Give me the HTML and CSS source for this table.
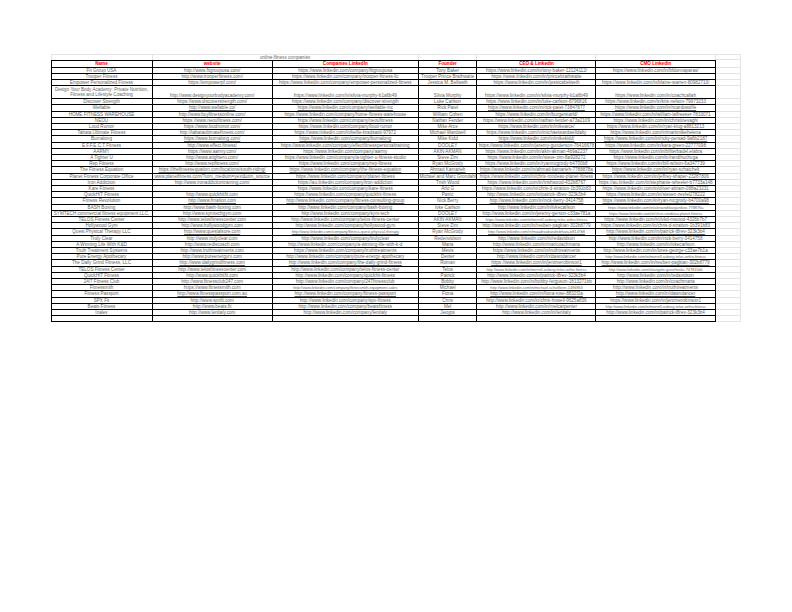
FILE: index.html
```html
<!DOCTYPE html>
<html>
<head>
<meta charset="utf-8">
<link rel="stylesheet" href="styles.css">
</head>
<body>
<div class="page">
<div class="sheet">
  <div class="title-row">
    <div></div>
    <div class="span2">online fitness companies</div>
    <div></div><div></div><div></div><div class="ext"></div>
  </div>
  <div class="grid">
    <div class="h">Name</div><div class="h">website</div><div class="h">Companies LinkedIn</div><div class="h">Founder</div><div class="h">CEO &amp; Linkedin</div><div class="h">CMO Linkedin</div><div></div>

    <div>Fit Group USA</div><div><a>http://www.fitgroupusa.com/</a></div><div><a>https://www.linkedin.com/company/fitgroupusa</a></div><div>Tony Baker</div><div><a>https://www.linkedin.com/in/tony-baker-12124112/</a></div><div><a>https://www.linkedin.com/in/bfdonnaparas/</a></div><div></div>
    <div>Trooper Fitness</div><div><a>http://www.trooperfitness.com/</a></div><div><a>https://www.linkedin.com/company/trooper-fitness-llc</a></div><div>Trooper Prince Brathwaite</div><div><a>https://www.linkedin.com/in/princebrathwaite</a></div><div></div><div></div>
    <div>Empower Personalized Fitness</div><div><a>https://empowerpf.com/</a></div><div><a>https://www.linkedin.com/company/empower-personalized-fitness</a></div><div>Jessica M. Bellweih</div><div><a>https://www.linkedin.com/in/jessicabelweih</a></div><div><a>https://www.linkedin.com/in/blaine-warren-80982710/</a></div><div></div>
    <div class="tall">Design Your Body Academy: Private Nutrition, Fitness and Lifestyle Coaching</div><div><a>http://www.designyourbodyacademy.com/</a></div><div><a>https://www.linkedin.com/in/silvia-murphy-b1a6b49</a></div><div>Silvia Murphy</div><div><a>https://www.linkedin.com/in/silvia-murphy-b1a6b49</a></div><div><a>https://www.linkedin.com/in/coachcallah</a></div><div></div>
    <div>Discover Strength</div><div><a>https://www.discoverstrength.com/</a></div><div><a>https://www.linkedin.com/company/discover-strength</a></div><div>Luke Carlson</div><div><a>https://www.linkedin.com/in/luke-carlson-8796816</a></div><div><a>https://www.linkedin.com/in/kris-nelson-79973233</a></div><div></div>
    <div>Wellable</div><div><a>http://www.wellable.co/</a></div><div><a>https://www.linkedin.com/company/wellable-inc</a></div><div>Rick Patel</div><div><a>https://www.linkedin.com/in/rick-patel-73847877</a></div><div><a>https://www.linkedin.com/in/ricardowolfe</a></div><div></div>
    <div>HOME FITNESS WAREHOUSE</div><div><a>http://www.buyfitnessonline.com/</a></div><div><a>https://www.linkedin.com/company/home-fitness-warehouse</a></div><div>William Cohen</div><div><a>https://www.linkedin.com/in/burgerstarld/</a></div><div><a>https://www.linkedin.com/in/william-lalfreeser-7833071</a></div><div></div>
    <div>NEOU</div><div><a>https://www.neoufitness.com/</a></div><div><a>https://www.linkedin.com/company/neoufitness</a></div><div>Nathan Fender</div><div><a>https://www.linkedin.com/in/nathan-fender-a73a2109</a></div><div><a>https://www.linkedin.com/in/christinevaghi</a></div><div></div>
    <div>Loud Rumor</div><div><a>https://www.loudrumor.com/</a></div><div><a>https://www.linkedin.com/company/loud-rumor</a></div><div>Mike Arce</div><div><a>https://www.linkedin.com/in/mikearce/</a></div><div><a>https://www.linkedin.com/in/ryan-klug-a8813213</a></div><div></div>
    <div>Tabata Ultimate Fitness</div><div><a>http://tabataultimatefitness.com/</a></div><div><a>https://www.linkedin.com/in/kellie-bradsaidi-97972</a></div><div>Michael Wardwell</div><div><a>https://www.linkedin.com/in/michaelwardwelldalty</a></div><div><a>https://www.linkedin.com/in/markmikehelena</a></div><div></div>
    <div>Burnalong</div><div><a>https://www.burnalong.com/</a></div><div><a>https://www.linkedin.com/company/burnalong</a></div><div>Mike Kidd</div><div><a>https://www.linkedin.com/in/mikekidd/</a></div><div><a>https://www.linkedin.com/in/ricky-persad-9a6b2187</a></div><div></div>
    <div>E.F.F.E.C.T Fitness</div><div><a>http://www.effect.fitness/</a></div><div><a>https://www.linkedin.com/company/effectfitnesspersonaltraining</a></div><div>DOOLEY</div><div><a>https://www.linkedin.com/in/jeremy-gunderson-76416678</a></div><div><a>https://www.linkedin.com/in/kara-green-22777098</a></div><div></div>
    <div>AARMY</div><div><a>https://www.aarmy.com/</a></div><div><a>https://www.linkedin.com/company/aarmy</a></div><div><a>AKIN AKMAN</a></div><div><a>https://www.linkedin.com/in/akin-akman-4b9a2237</a></div><div><a>https://www.linkedin.com/in/bfilterbadel.elabra</a></div><div></div>
    <div>A Tighter U</div><div><a>http://www.atighteru.com/</a></div><div><a>https://www.linkedin.com/company/a-tighter-u-fitness-studio</a></div><div>Steve Zim</div><div><a>https://www.linkedin.com/in/steve-zim-8a928272</a></div><div><a>https://www.linkedin.com/in/randihuchuga</a></div><div></div>
    <div>Rep Fitness</div><div><a>http://www.repfitness.com/</a></div><div><a>https://www.linkedin.com/company/rep-fitness</a></div><div>Ryan McGrody</div><div><a>https://www.linkedin.com/in/ryanmcgrody-b4700b8</a></div><div><a>https://www.linkedin.com/in/bill-wilson-6a347739</a></div><div></div>
    <div>The Fitness Equation</div><div><a>https://thefitnessequation.com/locations/south-riding/</a></div><div><a>https://www.linkedin.com/company/the-fitness-equation</a></div><div><a>Ahmad Kamarieh</a></div><div><a>https://www.linkedin.com/in/ahmad-kamarieh-7788878a</a></div><div><a>https://www.linkedin.com/in/ryan-schaichelt</a></div><div></div>
    <div>Planet Fitness Corporate Office</div><div><a>www.planetfitness.com/?utm_medium=yext&amp;utm_source</a></div><div><a>https://www.linkedin.com/company/planet-fitness</a></div><div>Michael and Marc Grondahl</div><div><a>https://www.linkedin.com/in/chris-rondeau-planet-fitness</a></div><div><a>https://www.linkedin.com/in/jeffrey-shaper-23287806</a></div><div></div>
    <div>Iron Addiction</div><div><a>http://www.ironaddictiontraining.com/</a></div><div><a>https://au.linkedin.com/company/iron-addiction</a></div><div>Trish Wood</div><div><a>https://www.linkedin.com/in/trishwood-432b8767</a></div><div><a>https://au.linkedin.com/in/stephanie-wheeler-b7733a148</a></div><div></div>
    <div>Kare Fitness</div><div></div><div><a>https://www.linkedin.com/company/kare-fitness</a></div><div>Arlo G</div><div><a>https://www.linkedin.com/in/chris-d-stratton-1b391b83</a></div><div><a>https://www.linkedin.com/in/oliver-abram-088a23231</a></div><div></div>
    <div>QuickHIT Fitness</div><div><a>http://www.quickhitfit.com</a></div><div><a>https://www.linkedin.com/company/quickhit-fitness</a></div><div>Patric</div><div><a>http://www.linkedin.com/in/patrick-t8rev-323k3b4</a></div><div><a>https://www.linkedin.com/in/steven-zevfel278222</a></div><div></div>
    <div>Fitness Revolution</div><div><a>http://www.frnation.com</a></div><div><a>http://www.linkedin.com/company/fitness-consulting-group</a></div><div>Nick Berry</div><div><a>http://www.linkedin.com/in/nick-berry-3414758</a></div><div><a>https://www.linkedin.com/in/ryan-mcgrody-b4700a98</a></div><div></div>
    <div>BASH Boxing</div><div><a>http://www.bash-boxing.com</a></div><div><a>http://www.linkedin.com/company/bash-boxing</a></div><div>Ivke Carlson</div><div><a>http://www.linkedin.com/in/ivkecarlson</a></div><div class="sm"><a>https://www.linkedin.com/in/alexandrkarganikov-778876a</a></div><div></div>
    <div>SYMTECH commercial fitness equipment LLC.</div><div><a>http://www.symtechgym.com</a></div><div><a>http://www.linkedin.com/company/sym-tech</a></div><div>DOOLEY</div><div><a>http://www.linkedin.com/in/jeremy-gerson-c33ae781a</a></div><div class="sm"><a>https://www.linkedin.com/in/chris-rondeau-planet-fitness</a></div><div></div>
    <div>TELOS Fitness Center</div><div><a>http://www.telosfitnesscenter.com</a></div><div><a>http://www.linkedin.com/company/telos-fitness-center</a></div><div><a>AKIN AKMAN</a></div><div class="sm"><a>https://www.linkedin.com/in/merrell-asberg-telos-ortho-fitness</a></div><div><a>https://www.linkedin.com/in/ivkd-mwood-4326b7b7</a></div><div></div>
    <div>Hollywood Gym</div><div><a>http://www.hollywoodgym.com</a></div><div><a>http://www.linkedin.com/company/hollywood-gym</a></div><div>Steve Zim</div><div><a>http://www.linkedin.com/in/reuben-pagkian-302b8779</a></div><div><a>https://www.linkedin.com/in/chris-d-stratton-1b391b83</a></div><div></div>
    <div>Quest Physical Therapy LLC</div><div><a>http://www.questalsure.com</a></div><div class="sm"><a>http://www.linkedin.com/company/fitness-quest-physical-therapy</a></div><div>Ryan McGrody</div><div class="sm"><a>http://www.linkedin.com/in/maadraabarabubhata-b8147b8</a></div><div><a>http://www.linkedin.com/in/patrick-t8rev-323k3b4</a></div><div></div>
    <div>Truly Clear</div><div><a>http://www.trulyclear.com</a></div><div><a>http://www.linkedin.com/company/trulyclear</a></div><div>Redenvidson</div><div><a>http://www.linkedin.com/in/redavidson</a></div><div><a>http://www.linkedin.com/in/nick-berry-3414758</a></div><div></div>
    <div>A Winning Life With K&amp;D</div><div><a>http://www.rediscoach.com</a></div><div><a>http://www.linkedin.com/company/a-winning-life-with-k-d</a></div><div>Maria</div><div><a>http://www.linkedin.com/in/maricoachmaria</a></div><div><a>http://www.linkedin.com/in/ivkecarlson</a></div><div></div>
    <div>Truth Treatment Systems</div><div><a>http://www.truthtreatments.com</a></div><div><a>https://www.linkedin.com/company/truthtreatments</a></div><div>Mevis</div><div><a>https://www.linkedin.com/in/truthtreatments</a></div><div><a>http://www.linkedin.com/in/lores-george-c33ae7b1a</a></div><div></div>
    <div>Pure Energy Apothecary</div><div><a>http://www.pureenergyrx.com</a></div><div><a>http://www.linkedin.com/company/pure-energy-apothecary</a></div><div>Dexter</div><div><a>http://www.linkedin.com/in/dawndancer</a></div><div class="sm"><a>http://www.linkedin.com/in/merrell-asberg-telos-ortho-fitness</a></div><div></div>
    <div>The Daily Grind Fitness, LLC</div><div><a>http://www.dailygrindfitness.com</a></div><div><a>http://www.linkedin.com/company/the-daily-grind-fitness</a></div><div>Roman</div><div><a>https://www.linkedin.com/in/jeromerobinson1</a></div><div><a>http://www.linkedin.com/in/reuben-pagkian-302b8779</a></div><div></div>
    <div>TELOS Fitness Center</div><div><a>http://www.telosfitnesscenter.com</a></div><div><a>http://www.linkedin.com/company/telos-fitness-center</a></div><div>Telos</div><div class="sm"><a>http://www.linkedin.com/in/merrell-asberg-telos-ortho-fitness</a></div><div class="sm"><a>http://www.linkedin.com/in/angelo-gunshtraks-747811b6</a></div><div></div>
    <div>QuickHIT Fitness</div><div><a>http://www.quickhitfit.com</a></div><div><a>http://www.linkedin.com/company/quickhit-fitness</a></div><div>Patrick</div><div><a>http://www.linkedin.com/in/patrick-t8rev-323k3b4</a></div><div><a>http://www.linkedin.com/in/redavidson</a></div><div></div>
    <div>24/7 Fitness Club</div><div><a>http://www.fitnessclub247.com</a></div><div><a>http://www.linkedin.com/company/247fitnessclub</a></div><div>Bobby</div><div><a>http://www.linkedin.com/in/bobby-ferguson-1813271bb</a></div><div><a>http://www.linkedin.com/in/coachmaria</a></div><div></div>
    <div>Fitnessmith</div><div><a>https://www.fitnessmith.com</a></div><div class="sm"><a>http://www.linkedin.com/company/fitnessmith-equipment-sales</a></div><div>Michael</div><div class="sm"><a>http://www.linkedin.com/in/michael-schultlorer-1496963</a></div><div><a>http://www.linkedin.com/in/truthtreatments</a></div><div></div>
    <div>Fitness Passport</div><div><a>http://www.fitnesspassport.com.au</a></div><div><a>http://www.linkedin.com/company/fitness-passport</a></div><div>Fiona</div><div><a>http://www.linkedin.com/in/fiona-rose-8832f2a</a></div><div><a>http://www.linkedin.com/in/dawndancer</a></div><div></div>
    <div>SPX Fit</div><div><a>http://www.spxfit.com</a></div><div><a>http://www.linkedin.com/company/spx-fitness</a></div><div>Chris</div><div><a>http://www.linkedin.com/in/chris-howell-9625a836</a></div><div><a>https://www.linkedin.com/in/jeromerobinson1</a></div><div></div>
    <div>Beats Fitness</div><div><a>http://www.beats.fit</a></div><div><a>http://www.linkedin.com/company/beatsfitness</a></div><div>Mel</div><div><a>http://www.linkedin.com/in/melcarpenter</a></div><div class="sm"><a>http://www.linkedin.com/in/merrell-asberg-telos-ortho-fitness</a></div><div></div>
    <div>Inalev</div><div><a>http://www.lenitaly.com</a></div><div><a>http://www.linkedin.com/company/lenitaly</a></div><div>Jeoyps</div><div><a>http://www.linkedin.com/in/lenitaly</a></div><div><a>http://www.linkedin.com/in/patrick-t8rev-323k3b4</a></div><div></div>
    <div></div><div></div><div></div><div></div><div></div><div></div><div></div>
  </div>
</div>
</div>
</body>
</html>
```

FILE: styles.css
```css
* { box-sizing: border-box; }
html, body { margin: 0; padding: 0; background: #ffffff; }
body {
  font-family: "Liberation Sans", Arial, sans-serif;
  font-size: 4.6px;
  color: #666666;
}
.page { padding: 54px 0 0 50.5px; }
.sheet { display: flex; flex-direction: column; width: max-content; }
.title-row, .grid {
  display: grid;
  grid-template-columns: 102px 120.3px 146px 58.7px 119px 119.3px 25px;
}
.title-row > div {
  height: 6.3px;
  border-top: 1px solid #e3e3e3;
  border-right: 1px solid #e3e3e3;
}
.title-row > div:first-child { border-left: 1px solid #e3e3e3; }
.title-row .span2 {
  grid-column: span 2;
  font-style: italic;
  display: flex;
  justify-content: center;
  align-items: flex-end;
  line-height: 5.3px;
  white-space: nowrap;
}
.title-row .ext { border-bottom: 1px solid #e3e3e3; }
.grid > div {
  border-right: 1px solid #000;
  border-bottom: 1px solid #000;
  min-height: 6.2px;
  display: flex;
  justify-content: center;
  align-items: flex-end;
  overflow: hidden;
  white-space: nowrap;
  line-height: 5.2px;
}
.grid > div:nth-child(7n+1) { border-left: 1px solid #000; }
.grid > div:nth-child(-n+6) { border-top: 1px solid #000; }
.grid > div:nth-child(7n) {
  border-right: 1px solid #e3e3e3;
  border-bottom: 1px solid #e3e3e3;
}
.grid > div.h { color: #ff0000; font-weight: bold; }
.grid > div.tall {
  white-space: normal;
  text-align: center;
  min-height: 13px;
  line-height: 5.6px;
  align-items: center;
}
.grid > div.sm { font-size: 3.9px; letter-spacing: -0.05px; }
a { color: #666666; text-decoration: underline; }
```
